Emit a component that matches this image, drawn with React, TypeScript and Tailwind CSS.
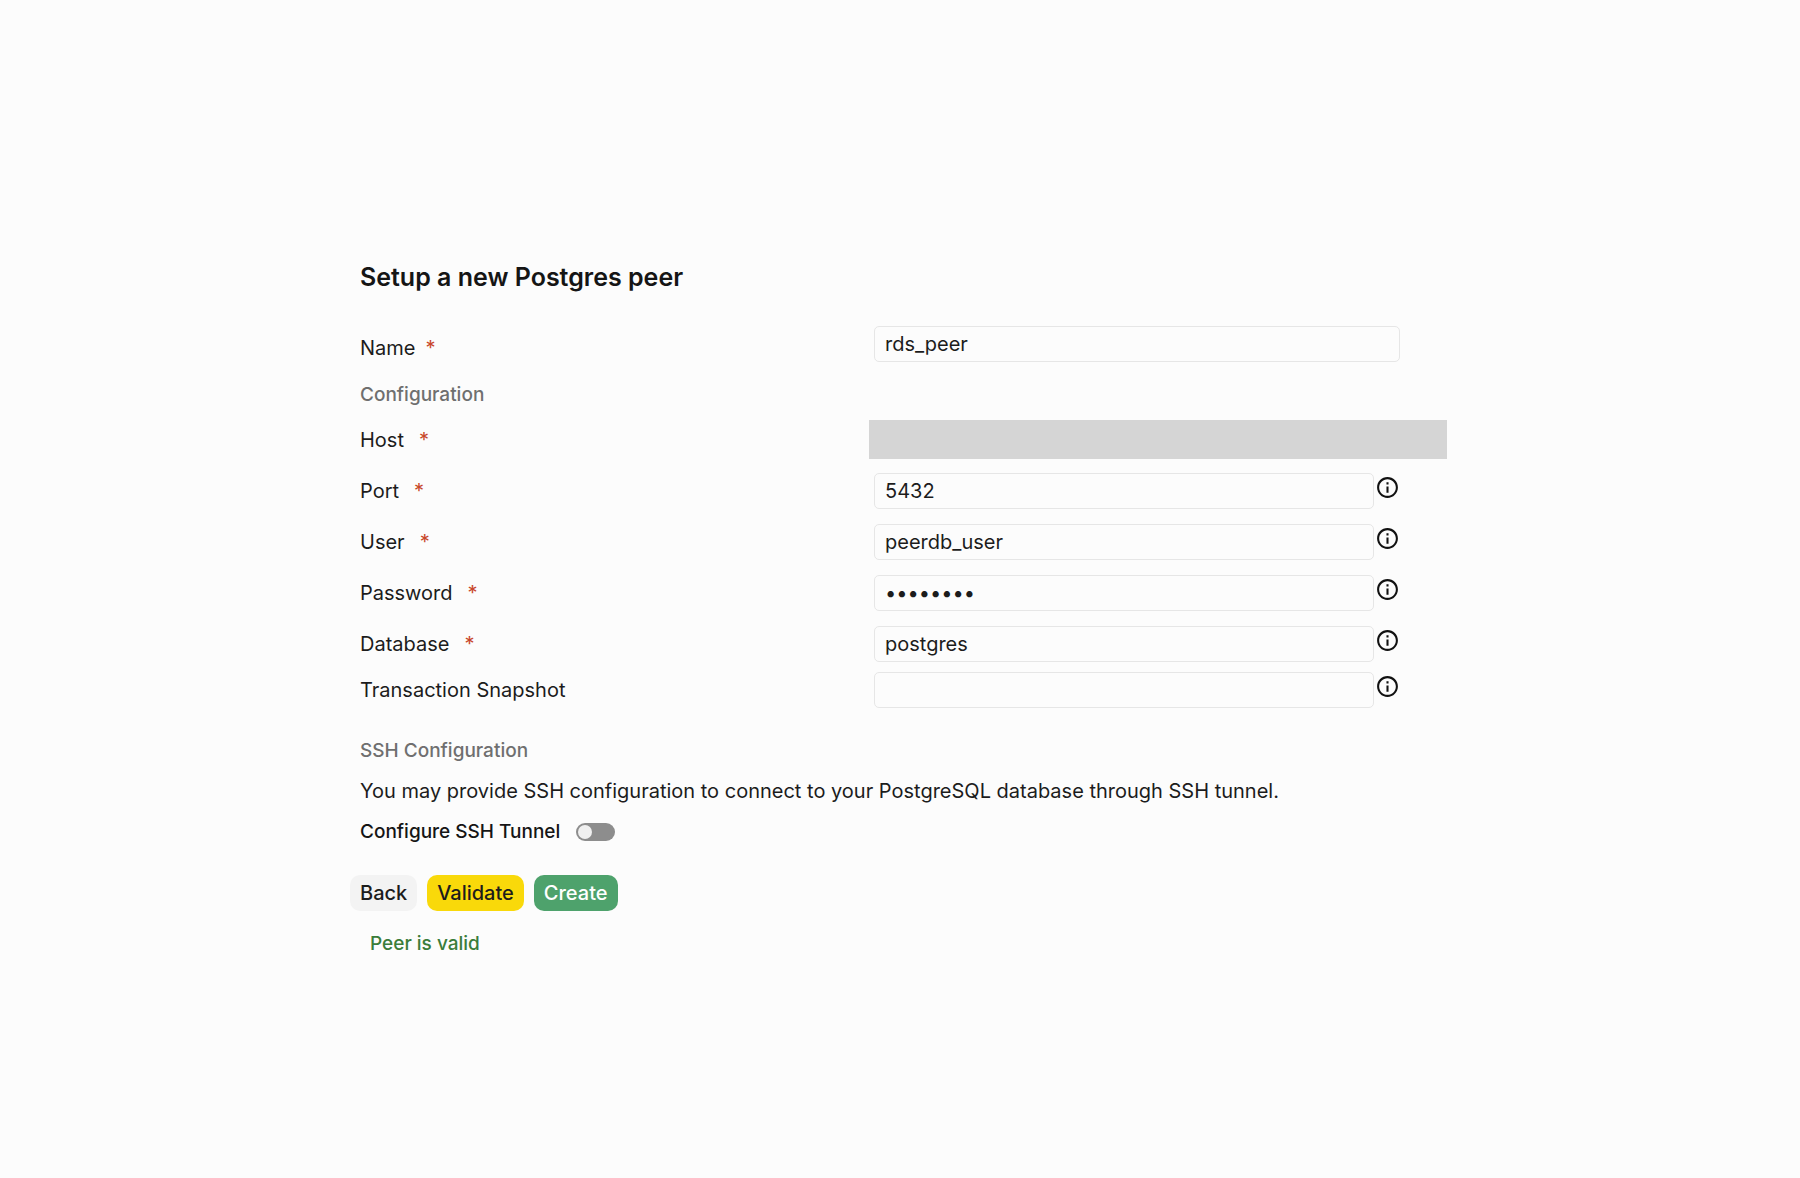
import { useState } from "react";
import type { ReactNode } from "react";
import { MdInfoOutline } from "react-icons/md";

const inputClass =
  "block h-9 w-full min-w-0 rounded-[5px] border border-[#e6e6e6] bg-transparent px-[10px] text-[20px] leading-[30px] text-[#1c1c1c] outline-none";

type RowProps = {
  id: string;
  label: string;
  required?: boolean;
  children: ReactNode;
};

function Row({ id, label, required, children }: RowProps) {
  return (
    <div className="grid grid-cols-[minmax(0,514fr)_minmax(0,526fr)] items-center">
      <label htmlFor={id} className="flex items-center gap-[15px] text-[20px] leading-[30px]">
        {label}
        {required && <span className="text-[#c8472b]">*</span>}
      </label>
      {children}
    </div>
  );
}

type FieldProps = {
  id: string;
  label: string;
  initial?: string;
  type?: string;
  required?: boolean;
};

function Field({ id, label, initial = "", type = "text", required }: FieldProps) {
  const [value, setValue] = useState(initial);
  return (
    <Row id={id} label={label} required={required}>
      <div className="flex items-start gap-px">
        <input
          id={id}
          type={type}
          value={value}
          autoComplete="off"
          onChange={(e) => setValue(e.target.value)}
          className={inputClass}
        />
        <button type="button" aria-label={`About ${label}`} className="mt-[2px] shrink-0 text-[#111111]">
          <MdInfoOutline size={25} />
        </button>
      </div>
    </Row>
  );
}

export default function App() {
  const [name, setName] = useState("rds_peer");
  const [tunnel, setTunnel] = useState(false);

  return (
    <main className="min-h-screen bg-[#fcfcfc] pt-[260px] pb-12 font-['Inter',sans-serif] text-[#1c1c1c]">
      <form className="mx-auto w-full max-w-[1100px]" onSubmit={(e) => e.preventDefault()}>
        <div className="pr-[50px] pl-[10px]">
          <h1 className="text-[25px] leading-[34px] font-semibold text-[#151515]">Setup a new Postgres peer</h1>

          <div className="mt-8 grid grid-cols-[minmax(0,514fr)_minmax(0,526fr)] items-start">
            <label htmlFor="name" className="flex items-center gap-[10px] pt-[7px] text-[20px] leading-[30px]">
              Name
              <span className="text-[#c8472b]">*</span>
            </label>
            <input
              id="name"
              value={name}
              autoComplete="off"
              onChange={(e) => setName(e.target.value)}
              className={inputClass}
            />
          </div>

          <h2 className="mt-[17px] text-[19px] leading-[30px] font-medium text-[#6f6f6f]">Configuration</h2>

          <div className="mt-3 flex flex-col gap-[15px]">
            <Row id="host" label="Host" required>
              <div className="relative">
                <input id="host" autoComplete="off" className={inputClass} />
                <div className="absolute -top-[2px] -right-[47px] -bottom-[1px] -left-[5px] bg-[#d5d5d5]" />
              </div>
            </Row>
            <Field id="port" label="Port" initial="5432" required />
            <Field id="user" label="User" initial="peerdb_user" required />
            <Field id="password" label="Password" initial="peerdb12" type="password" required />
            <Field id="database" label="Database" initial="postgres" required />
          </div>
          <div className="mt-[10px]">
            <Field id="snapshot" label="Transaction Snapshot" />
          </div>

          <h2 className="mt-7 text-[19px] leading-[30px] font-medium text-[#6f6f6f]">SSH Configuration</h2>
          <p className="mt-[10px] text-[20px] leading-[30px]">
            You may provide SSH configuration to connect to your PostgreSQL database through SSH tunnel.
          </p>
          <div className="mt-[11px] flex items-center gap-4">
            <span id="tunnel-label" className="text-[19px] leading-[30px] font-medium text-[#151515]">
              Configure SSH Tunnel
            </span>
            <button
              type="button"
              role="switch"
              aria-checked={tunnel}
              aria-labelledby="tunnel-label"
              onClick={() => setTunnel(!tunnel)}
              className={`flex h-[18px] w-[39px] items-center rounded-full bg-[#8d8d8d] px-[2px] ${tunnel ? "justify-end" : "justify-start"}`}
            >
              <span className="size-[14px] rounded-full bg-[#f0f0f0]" />
            </button>
          </div>
        </div>

        <div className="mt-7 flex gap-[10px] text-[20px] leading-[36px] font-medium">
          <button type="button" className="rounded-[10px] bg-[#f3f3f3] px-[10px] text-[#1c1c1c]">
            Back
          </button>
          <button type="button" className="rounded-[10px] bg-[#f9d90a] px-[10px] text-[#1c1c1c]">
            Validate
          </button>
          <button type="submit" className="rounded-[10px] bg-[#4ea26c] px-[10px] text-white">
            Create
          </button>
        </div>
        <p role="status" className="mt-[18px] pl-5 text-[19px] leading-[30px] font-medium text-[#3a7d3a]">
          Peer is valid
        </p>
      </form>
    </main>
  );
}
